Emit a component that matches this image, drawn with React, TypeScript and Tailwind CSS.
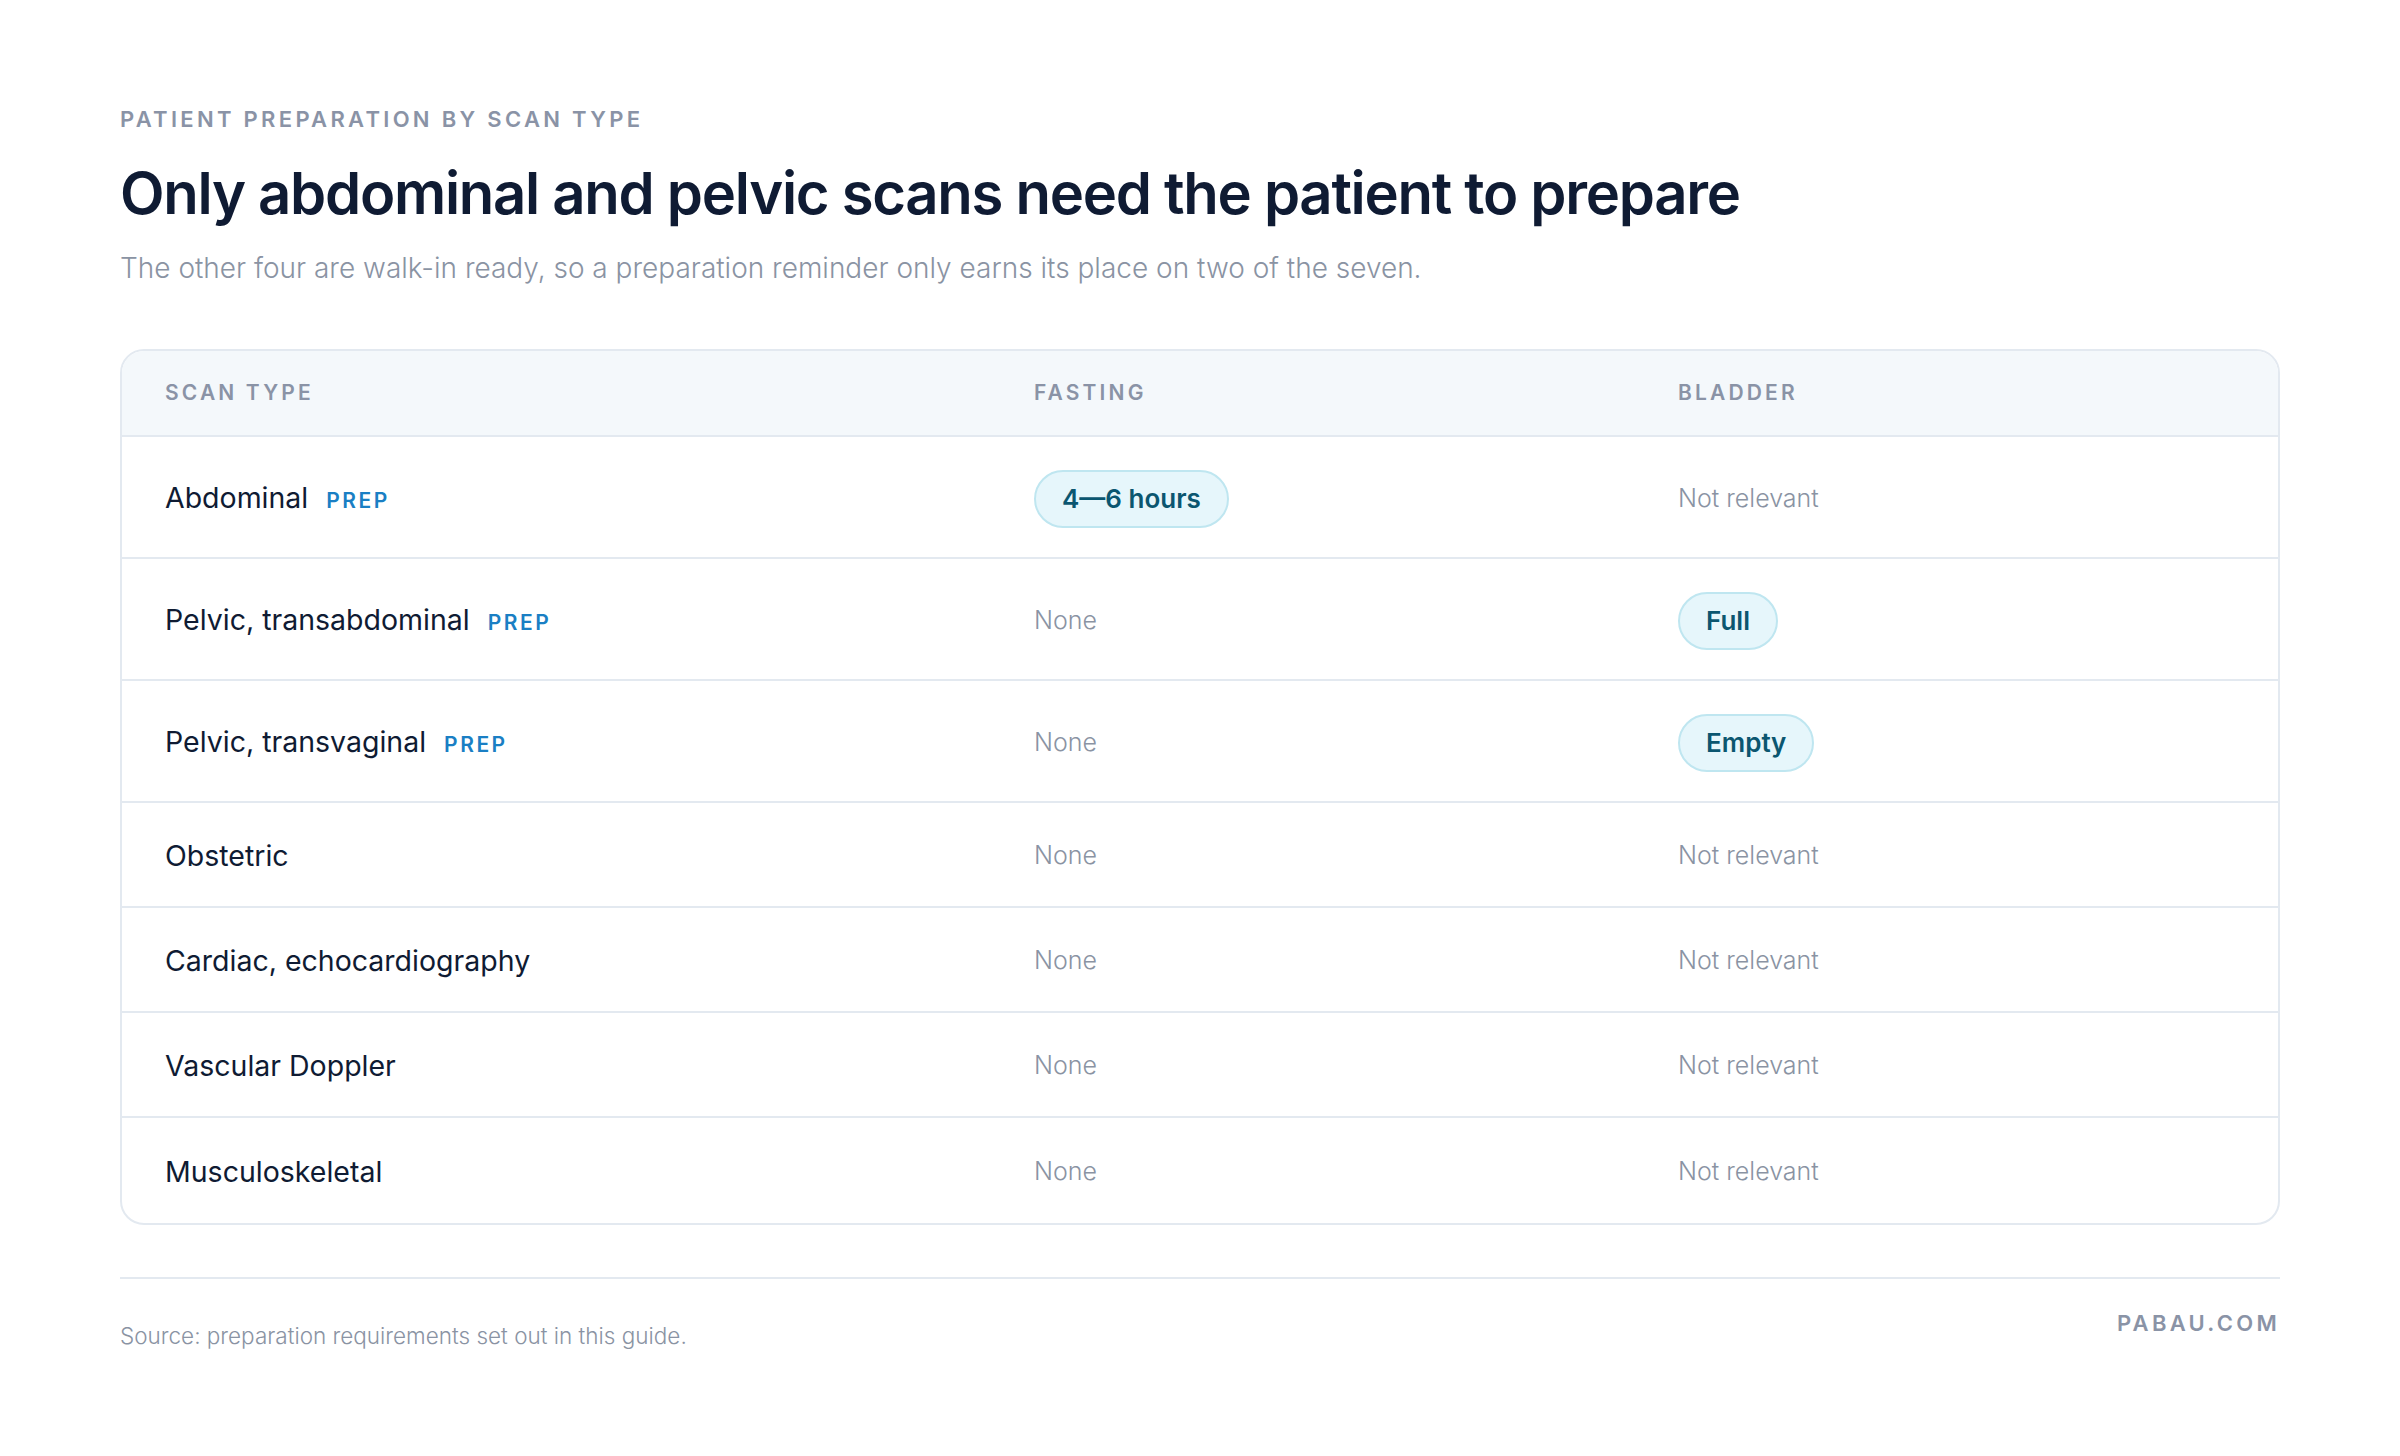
const ROWS: { name: string; prep?: boolean; fasting?: string; bladder?: string }[] = [
  { name: 'Abdominal', prep: true, fasting: '4—6 hours' },
  { name: 'Pelvic, transabdominal', prep: true, bladder: 'Full' },
  { name: 'Pelvic, transvaginal', prep: true, bladder: 'Empty' },
  { name: 'Obstetric' },
  { name: 'Cardiac, echocardiography' },
  { name: 'Vascular Doppler' },
  { name: 'Musculoskeletal' },
]

function Pill({ label }: { label: string }) {
  return (
    <span className="inline-flex h-[58px] items-center rounded-full border-2 border-[#bfe6f0] bg-[#e6f6fb] px-[26px] text-[26px] font-semibold text-[#0b5670]">
      {label}
    </span>
  )
}

function Muted({ label }: { label: string }) {
  return <span className="text-[25px] font-light text-[#8a93a3]">{label}</span>
}

export default function App() {
  return (
    <div className="min-h-screen bg-white px-[120px] pt-[104px] font-['Inter','Liberation_Sans',sans-serif] text-[#0f1b33]">
      {/* Heading */}
      <p className="text-[22px] font-semibold leading-[30px] tracking-[0.15em] text-[#8a93a6]">
        PATIENT PREPARATION BY SCAN TYPE
      </p>
      <h1 className="mt-[24px] text-[58px] font-semibold leading-[70px] tracking-[-0.022em] text-[#0f1b33]">
        Only abdominal and pelvic scans need the patient to prepare
      </h1>
      <p className="mt-[20px] text-[28px] font-light leading-[40px] text-[#8a93a3]">
        The other four are walk-in ready, so a preparation reminder only earns its place on two of the seven.
      </p>

      {/* Table */}
      <div className="mt-[61px] overflow-hidden rounded-[24px] border-2 border-[#e3e9f0]">
        <div className="grid h-[86px] grid-cols-[912px_644px_1fr] items-center border-b-2 border-[#e3e9f0] bg-[#f4f8fb] text-[21px] font-semibold tracking-[0.15em] text-[#8a93a6]">
          <span className="pl-[43px]">SCAN TYPE</span>
          <span>FASTING</span>
          <span>BLADDER</span>
        </div>
        {ROWS.map((r, i) => {
          const tall = !!(r.fasting || r.bladder)
          return (
            <div
              key={r.name}
              className={`grid grid-cols-[912px_644px_1fr] items-center ${tall ? 'h-[122px]' : 'h-[105px]'} ${
                i < ROWS.length - 1 ? 'border-b-2 border-[#e3e9f0]' : ''
              }`}
            >
              <div className="flex items-baseline gap-[18px] pl-[43px] pt-[3px]">
                <span className="text-[28.5px] text-[#0f1b33]">{r.name}</span>
                {r.prep && (
                  <span className="text-[21px] font-semibold tracking-[0.12em] text-[#1a7fc4]">PREP</span>
                )}
              </div>
              <div className="pt-[3px]">{r.fasting ? <Pill label={r.fasting} /> : <Muted label="None" />}</div>
              <div className="pt-[3px]">{r.bladder ? <Pill label={r.bladder} /> : <Muted label="Not relevant" />}</div>
            </div>
          )
        })}
      </div>

      {/* Footer */}
      <div className="mt-[52px] border-t-2 border-[#e3e9f0] pt-[28px]">
        <div className="flex items-start justify-between">
          <span className="mt-[12px] text-[22.5px] font-light text-[#8a93a3]">
            Source: preparation requirements set out in this guide.
          </span>
          <span className="text-[22px] font-semibold tracking-[0.15em] text-[#8a93a6]">PABAU.COM</span>
        </div>
      </div>
    </div>
  )
}
